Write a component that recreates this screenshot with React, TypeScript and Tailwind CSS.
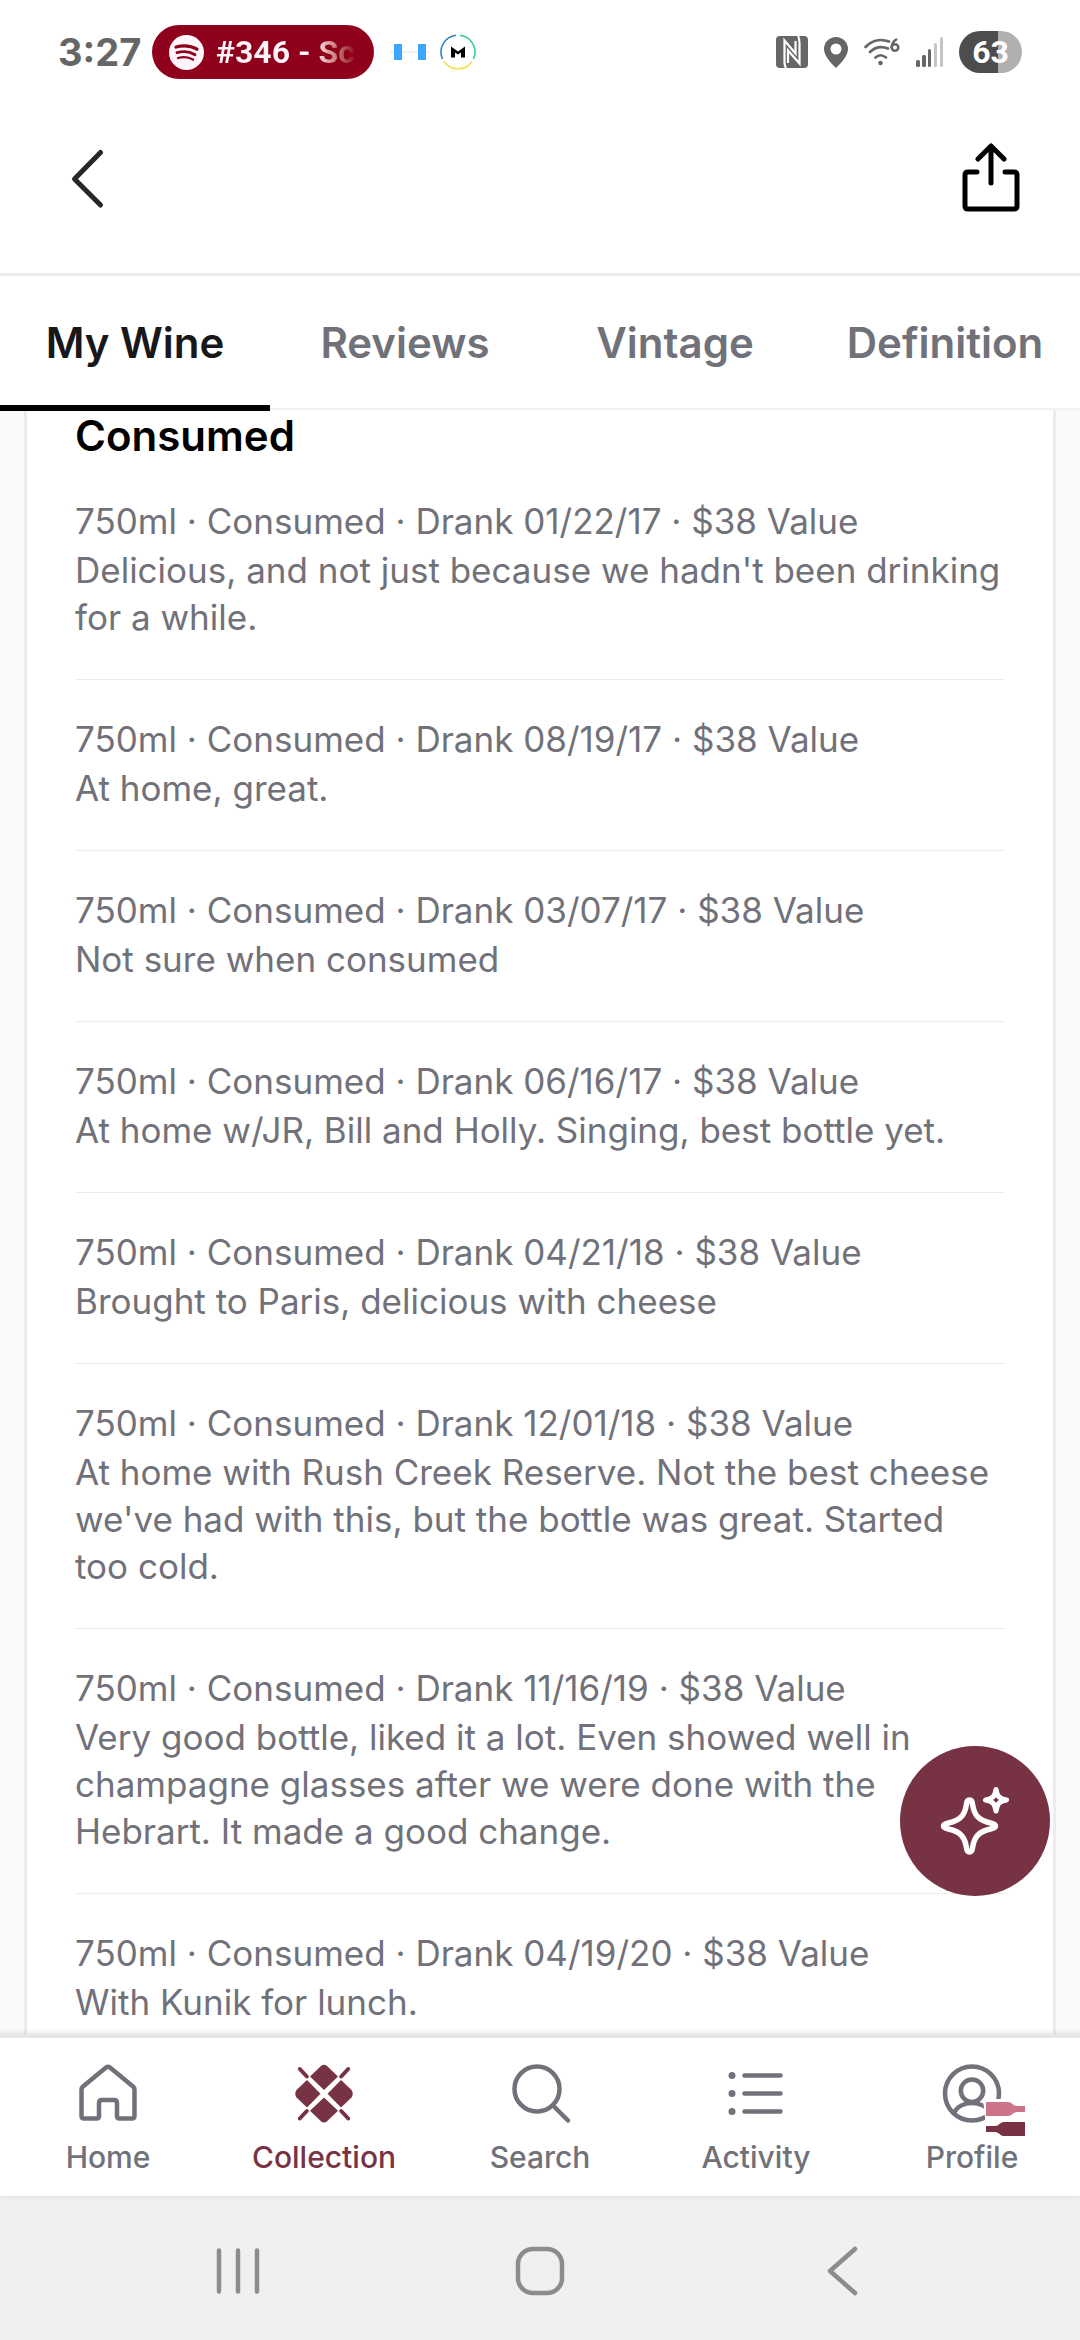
import React from "react";

const entries = [
  { date: "01/22/17", note: "Delicious, and not just because we hadn't been drinking for a while." },
  { date: "08/19/17", note: "At home, great." },
  { date: "03/07/17", note: "Not sure when consumed" },
  { date: "06/16/17", note: "At home w/JR, Bill and Holly. Singing, best bottle yet." },
  { date: "04/21/18", note: "Brought to Paris, delicious with cheese" },
  { date: "12/01/18", note: "At home with Rush Creek Reserve. Not the best cheese we've had with this, but the bottle was great. Started too cold." },
  { date: "11/16/19", note: "Very good bottle, liked it a lot. Even showed well in champagne glasses after we were done with the Hebrart. It made a good change." },
  { date: "04/19/20", note: "With Kunik for lunch." },
];

const tabs = ["My Wine", "Reviews", "Vintage", "Definition"];

function StatusBar() {
  return (
    <div className="flex h-[104px] shrink-0 items-center justify-between px-[58px] text-[#666666]">
      <div className="flex items-center">
        <span className="w-[94px] text-[38px] leading-[54px] font-bold">3:27</span>
        <div className="flex h-[54px] w-[222px] items-center gap-3 rounded-full bg-[#8f001c] pl-[17px]">
          <svg className="h-[35px] w-[35px] shrink-0" viewBox="0 0 35 35" fill="none" aria-hidden="true">
            <circle cx="17.5" cy="17.5" r="17.5" fill="#fff5fa" />
            <g stroke="#8f001c" strokeLinecap="round">
              <path d="M7 12c7.500-2 15-1.300 21 2.200" strokeWidth="3.2" />
              <path d="M8 17.700c6.500-1.800 13-1 18 2" strokeWidth="2.8" />
              <path d="M9 23c5.500-1.500 11-0.800 15 1.600" strokeWidth="2.3" />
            </g>
          </svg>
          <span className="bg-linear-to-r from-[#fff5fa] from-70% to-[#8f001c] to-100% bg-clip-text font-['Roboto',sans-serif] text-[32px] leading-[40px] font-bold whitespace-nowrap text-transparent">
            #346 - Sc
          </span>
        </div>
        <svg className="ml-4 h-4 w-[40px]" viewBox="0 0 40 16" aria-hidden="true">
          <path d="M0 8h40" stroke="#f1f1f3" strokeWidth="2" />
          <path d="M4 0h8v16h-8zM28 0h8v16h-8z" fill="#3ba7ff" />
        </svg>
        <svg className="ml-[10px] h-9 w-9" viewBox="0 0 36 36" fill="none" aria-hidden="true">
          <path d="M2.500 25A17 17 0 0 1 16 1.200" stroke="#2a82c4" strokeWidth="1.5" />
          <path d="M20 1.200A17 17 0 0 1 33.500 25" stroke="#35c98b" strokeWidth="1.5" />
          <path d="M4 27.500A17 17 0 0 0 32 27.500" stroke="#f2e04b" strokeWidth="1.5" />
          <path d="M11 12.500l7 5 7-5v11h-4v-5l-3 2-3-2v5h-4z" fill="#000" />
        </svg>
      </div>
      <div className="flex items-center">
        <svg className="h-8 w-8" viewBox="0 0 32 32" aria-hidden="true">
          <rect width="32" height="32" rx="4" fill="#666" />
          <path
            d="M10 32q-1.500-2-1.500-6V4.500L19.500 17.500V5M12 27V14.500L23.500 27.500V8q0-6-1.500-8"
            fill="none"
            stroke="#fff"
            strokeWidth="2.2"
          />
        </svg>
        <svg className="ml-4 h-[31px] w-6" viewBox="0 0 24 31" aria-hidden="true">
          <path fillRule="evenodd" d="M12 0a12 12 0 0 1 12 12c0 7-7 14-12 19C7 26 0 19 0 12A12 12 0 0 1 12 0zm0 6.500a5.500 5.500 0 1 0 0 11 5.500 5.500 0 0 0 0-11z" fill="#666" />
        </svg>
        <svg className="ml-4 h-7 w-9" viewBox="0 0 36 28" fill="none" stroke="#666" strokeWidth="2.6" strokeLinecap="round" aria-hidden="true">
          <path d="M1.500 9C8 2 17 0.500 25 3.500M6 14c5.500-5.500 11.500-6 18-3.500M11.500 19.500c3-2.800 7-2.800 10.500 0" />
          <circle cx="16.5" cy="25" r="1" fill="#666" />
          <circle cx="31" cy="9.5" r="3.3" />
          <path d="M27.700 9c.3-3.500 2-6 4.500-7.500" />
        </svg>
        <svg className="ml-4 h-[30px] w-[27px]" viewBox="0 0 27 30" aria-hidden="true">
          <g fill="#666">
            <rect y="23" width="4" height="7" rx="1.5" />
            <rect x="6" y="18" width="4" height="12" rx="1.5" />
            <rect x="12" y="12" width="3" height="18" rx="1.5" />
          </g>
          <g fill="#c4c4c4">
            <rect x="18" y="6" width="3" height="24" rx="1.5" />
            <rect x="24" y="0" width="3" height="30" rx="1.5" />
          </g>
        </svg>
        <span className="ml-4 flex h-[42px] w-[63px] items-center justify-center rounded-full bg-linear-to-r from-[#4d4d4d] from-62% to-[#b0b0b0] to-62% font-['Roboto',sans-serif] text-[32px] leading-[42px] font-bold text-white">
          63
        </span>
      </div>
    </div>
  );
}

const stroke = { fill: "none", stroke: "currentColor", strokeWidth: 4.5, strokeLinecap: "round", strokeLinejoin: "round" } as const;

const nav = [
  {
    label: "Home",
    icon: (
      <path {...stroke} d="M28 5.500q2-1.500 4 0l23 19q1.500 1.300 1.500 3V54q0 2.500-2.500 2.500H41.500q-2.500 0-2.500-2.500V41q0-3-3-3H24q-3 0-3 3v13q0 2.500-2.500 2.500H6q-2.500 0-2.500-2.500V27.500q0-1.700 1.500-3z" />
    ),
  },
  {
    label: "Collection",
    icon: (
      <g fill="currentColor">
        <path d="M27 4q3-2.500 6 0l11 10.500L30 28 16 14.500z" />
        <path d="M27 59.300q3 2.500 6 0l11-10.500L30 35.500 16 48.800z" />
        <path d="M2.500 28q-2.500 3.500 0 7.500l10.500 10L26.500 31.700 13 18z" />
        <path d="M57.500 28q2.500 3.500 0 7.500l-10.500 10L33.500 31.700 47 18z" />
        <path {...stroke} strokeWidth="4" d="M5.800 7l7 7.500M54.200 7l-7 7.500M5.800 56.500l7-7.500M54.200 56.500l-7-7.500" />
      </g>
    ),
  },
  { label: "Search", icon: <path {...stroke} d="M27 4.500a22.500 22.500 0 1 1 0 45 22.500 22.500 0 0 1 0-45zM43 43.500l15 15" /> },
  {
    label: "Activity",
    icon: (
      <>
        <path {...stroke} d="M18.500 13.500h36M18.500 31.500h36M18.500 49.500h36" />
        <g fill="currentColor">
          <circle cx="6" cy="13.5" r="3.5" />
          <circle cx="6" cy="31.5" r="3.5" />
          <circle cx="6" cy="49.5" r="3.5" />
        </g>
      </>
    ),
  },
  {
    label: "Profile",
    icon: (
      <>
        <circle {...stroke} cx="30" cy="31.5" r="27" />
        <circle {...stroke} cx="30" cy="28.700" r="11.2" />
        <path {...stroke} d="M12 51.500c5-14 31-14 36 0" />
        <path d="M41 37h42v28H44z" fill="#fff" />
        <path d="M44 40h22c4 0 5 4 9 4h8v6h-8c-4 0-5 4-9 4H44z" fill="#cc7289" />
        <path d="M83 60H62c-4 0-5 4-9 4h-9v6h9c4 0 5 4 9 4h21z" fill="#773344" />
      </>
    ),
  },
];

export default function App() {
  return (
    <div className="flex h-screen w-full flex-col overflow-hidden bg-white font-['Inter',sans-serif]">
      <StatusBar />
      <header className="flex h-[172px] shrink-0 items-center justify-between border-b-3 border-[#ececec] px-[56px] pb-[20px]">
        <button aria-label="Back" className="p-3">
          <svg className="h-[64px] w-[40px]" viewBox="0 0 40 64" fill="none" aria-hidden="true">
            <path d="M32.500 5.500L6.500 32l26 26" stroke="#27272a" strokeWidth="5" strokeLinecap="round" strokeLinejoin="round" />
          </svg>
        </button>
        <button aria-label="Share">
          <svg className="h-[70px] w-[64px] overflow-visible" viewBox="1 2 64 70" fill="none" stroke="#000" strokeWidth="5" strokeLinecap="round" strokeLinejoin="round" aria-hidden="true">
            <path d="M32 41V4M19 17L32 4l13 13M18 30H9q-3 0-3 3v31q0 3 3 3h46q3 0 3-3V33q0-3-3-3h-9" />
          </svg>
        </button>
      </header>
      <div role="tablist" className="relative z-10 flex h-[134px] shrink-0 border-b-2 border-[#f3f3f4] text-[42px] font-semibold">
        {tabs.map((tab, i) => (
          <button
            key={tab}
            role="tab"
            aria-selected={i === 0}
            className={
              i === 0
                ? "-mb-[3px] flex-1 basis-0 border-b-6 border-black pt-1 text-[#18181b]"
                : "flex-1 basis-0 pt-px text-[#71717a]"
            }
          >
            {tab}
          </button>
        ))}
      </div>
      <div className="relative flex min-h-0 flex-1 flex-col">
        <main className="min-h-0 flex-1 overflow-hidden bg-[#fafafa] px-6">
          <section className="border-x-3 border-[#ececec] bg-white px-12">
            <h2 className="mb-px text-[42px] leading-[51px] font-semibold text-black">Consumed</h2>
            <ul className="text-[35px] leading-[47px] text-[#71717a]">
              {entries.map((e) => (
                <li key={e.date} className="border-b border-[#ececec] pt-[36px] pb-[38px]">
                  <p className="mb-[2px]">750ml · Consumed · Drank {e.date} · $38 Value</p>
                  <p>{e.note}</p>
                </li>
              ))}
            </ul>
          </section>
        </main>
        <button aria-label="Assistant" className="absolute right-[30px] bottom-[138px] flex size-[150px] items-center justify-center rounded-full bg-[#773344]">
          <svg className="size-[76px] overflow-visible" viewBox="-2 -2 76 76" fill="none" stroke="#fff" strokeLinejoin="round" aria-hidden="true">
            <path d="M30.500 15q2.500 0 3 4c1.500 11 6 16.500 18 19 3.500.7 5 1.500 5 3s-1.500 2.300-5 3c-12 2.500-16.500 8-18 19q-.5 4-3 4t-3-4c-1.500-11-6-16.500-18-19-3.500-.7-5-1.500-5-3s1.500-2.300 5-3c12-2.500 16.500-8 18-19q.5-4 3-4z" strokeWidth="5.5" />
            <path d="M57 4.500c1.200 7 3 9 10.500 10.500C60 16.500 58.200 18.500 57 26c-1.200-7.500-3-9.500-10.500-11C54 13.500 55.800 11.500 57 4.500z" strokeWidth="5" />
          </svg>
        </button>
      </div>
      <nav className="z-10 grid h-[162px] shrink-0 grid-cols-5 border-t-4 border-[#e6e6e6] bg-white shadow-[0_-1px_6px_rgba(0,0,0,0.12)]">
        {nav.map((n) => (
          <a
            key={n.label}
            href="#"
            aria-current={n.label === "Collection" ? "page" : undefined}
            className={
              n.label === "Collection"
                ? "flex flex-col items-center pt-6 text-[#773344]"
                : "flex flex-col items-center pt-6 text-[#71717a]"
            }
          >
            <svg className="size-[60px] overflow-visible" viewBox="0 0 60 60" aria-hidden="true">
              {n.icon}
            </svg>
            <span className="mt-[15px] text-[30px] leading-[40px] font-medium">{n.label}</span>
          </a>
        ))}
      </nav>
      <div className="flex h-[144px] shrink-0 items-center justify-around bg-[#f0f0f3] px-[87px] pt-[6px]">
        <button aria-label="Recent apps">
          <svg className="size-[60px]" viewBox="0 0 60 60" fill="none" stroke="#8c8c8c" strokeWidth="4.5" strokeLinecap="round" aria-hidden="true">
            <path d="M11 9.500v41M30 9.500v41M49 9.500v41" />
          </svg>
        </button>
        <button aria-label="Home screen">
          <svg className="size-[60px]" viewBox="0 0 60 60" fill="none" stroke="#8c8c8c" strokeWidth="4.5" aria-hidden="true">
            <rect x="8" y="8" width="44" height="44" rx="15" />
          </svg>
        </button>
        <button aria-label="System back">
          <svg className="size-[60px]" viewBox="0 0 60 60" fill="none" stroke="#8c8c8c" strokeWidth="4.5" strokeLinecap="round" strokeLinejoin="round" aria-hidden="true">
            <path d="M43 8L18 30l25 22" />
          </svg>
        </button>
      </div>
    </div>
  );
}
